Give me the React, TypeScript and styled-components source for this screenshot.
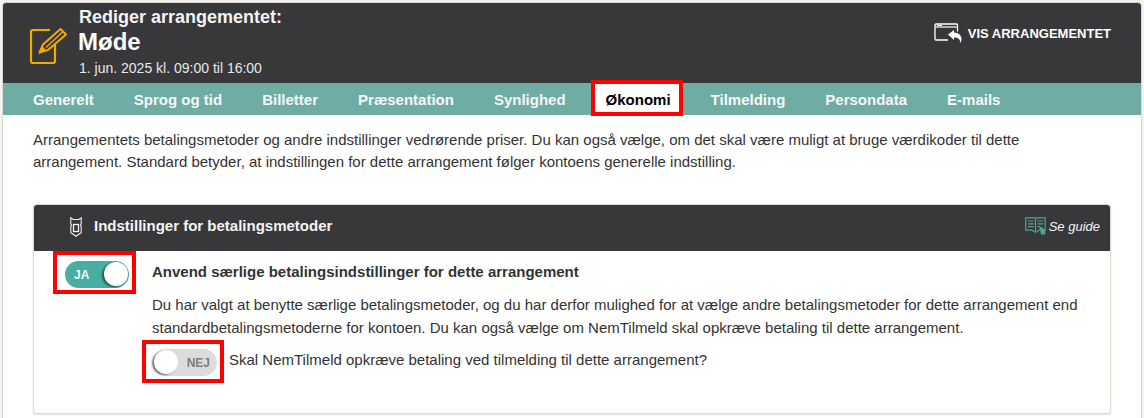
import React from "react";
import styled, { createGlobalStyle } from "styled-components";

const Global = createGlobalStyle`
  html, body { margin: 0; padding: 0; background: #fff; }
  body { font-family: "Liberation Sans", Arial, sans-serif; color: #333; overflow: hidden; }
`;
const Page = styled.div`
  width: 1144px; height: 418px; box-sizing: border-box; padding: 2px 2px 0 2px; overflow: hidden;
  background: #f4f3ef;
`;
const Card = styled.div`
  height: 416px; background: #fff; border: 1px solid #dcdad2; border-bottom: 0; border-radius: 4px 4px 0 0; box-sizing: border-box;
`;
const Header = styled.header`
  height: 80px; background: #38383a; border-radius: 3px 3px 0 0; display: flex; color: #fff;
  justify-content: space-between; box-sizing: border-box;
`;
const TitleGroup = styled.div`
  display: flex; align-items: flex-start; padding-left: 26px;
`;
const LogoSlot = styled.div`
  width: 50px; padding-top: 24px; flex: none;
`;
const Titles = styled.div`
  display: flex; flex-direction: column; padding-top: 4px;
`;
const Kicker = styled.div`
  font-size: 18px; font-weight: 700; line-height: 20px; color: #f4f4f4;
`;
const EventName = styled.h1`
  margin: 0 0 0 -1px; font-size: 24px; line-height: 30px; font-weight: 700;
`;
const EventDate = styled.div`
  font-size: 14px; line-height: 18px; margin-top: 2px; color: #e8e8e8;
`;
const ViewLink = styled.a`
  display: flex; align-items: center; gap: 6px; height: 24px; margin: 18px 30px 0 0;
  font-size: 13px; font-weight: 700; color: #fff;
`;
const Nav = styled.nav`
  height: 32px; background: #6fada4; display: flex; padding-left: 10px; align-items: stretch;
`;
const Tab = styled.a<{ $active?: boolean }>`
  position: relative; display: flex; align-items: center; padding: 0 20px;
  font-size: 15px; font-weight: 700; color: ${(p) => (p.$active ? "#000" : "#f4f8f7")};
  white-space: nowrap; z-index: 0;
  ${(p) =>
    p.$active &&
    `&::before { content: ""; position: absolute; z-index: -1; left: 5px; right: 8px; top: -3px; bottom: -1px;
      background: #fff; border: 4px solid #f00; box-sizing: border-box; }`}
`;
const Intro = styled.p`
  margin: 0; padding: 14px 30px 0; font-size: 15px; line-height: 22px; color: #333; height: 76px; box-sizing: border-box;
`;
const Panel = styled.section`
  margin: 13px 30px 0; height: 210px; box-sizing: border-box; border: 1px solid #dcdad2; border-radius: 4px;
  box-shadow: 0 1px 2px rgba(0,0,0,.12); background: #fff;
`;
const PanelHead = styled.div`
  height: 46px; background: #38383a; border-radius: 3px 3px 0 0; display: flex; box-sizing: border-box;
  align-items: center; justify-content: space-between; padding: 0 10px 4px 36px; color: #fff;
`;
const PanelTitle = styled.h2`
  margin: 0; font-size: 15px; font-weight: 700; display: flex; align-items: center; gap: 12px; color: #f4f4f4;
  line-height: 22px;
`;
const Guide = styled.a`
  display: flex; align-items: center; gap: 3px; font-size: 13px; font-style: italic; color: #f4f4f4;
`;
const PanelBody = styled.div`
  display: grid; grid-template-columns: 118px 1fr; padding-top: 10px;
`;
const ToggleCell = styled.div`
  padding-left: 31px;
`;
const Switch = styled.div<{ $on?: boolean }>`
  position: relative; width: 64px; height: 27px; border-radius: 14px; flex: none; box-sizing: border-box;
  background: ${(p) => (p.$on ? "#48aea4" : "#dcdcdc")};
  font-size: 12px; font-weight: 700; color: ${(p) => (p.$on ? "#f0f8f7" : "#7d7d7d")};
  display: flex; align-items: center; justify-content: ${(p) => (p.$on ? "flex-start" : "flex-end")};
  padding: 1px 7px 0 9px;
  &::before {
    content: ""; position: absolute; top: 1px; width: 24px; height: 24px; border-radius: 50%; background: #fff;
    ${(p) => (p.$on ? "right: 1px;" : "left: 1px;")}
    box-shadow: -2px 1px 2px rgba(0,0,0,.5);
  }
  &::after {
    content: ""; position: absolute; border: 4px solid #f00; box-sizing: border-box; pointer-events: none;
    ${(p) => (p.$on ? "left: -12px; right: -7px; top: -10px; bottom: -6px;" : "left: -11px; right: -7px; top: -9px; bottom: -7px;")}
  }
`;
const Content = styled.div`
  font-size: 15px; color: #333; padding-right: 20px;
`;
const Lead = styled.div`
  font-weight: 700; line-height: 22px;
`;
const Para = styled.p`
  margin: 10px 0 0; line-height: 23px;
`;
const QuestionRow = styled.div`
  display: flex; align-items: flex-start; gap: 12px; margin-top: 10px; line-height: 22px;
  margin-left: 1px;
`;

const NoteIcon = () => (
  <svg width="38" height="38" viewBox="0 0 38 38" fill="none" stroke="#f1aa00" strokeWidth="2.200" style={{ display: "block" }}>
    <path d="M21 3H4a2 2 0 0 0-2 2v29a2 2 0 0 0 2 2h20a2 2 0 0 0 2-2V17" />
    <path d="M10.500 25.500l3.500-8L31.500 2l5.500 5.500L19 23z" strokeLinejoin="round" strokeWidth="2" />
    <path d="M17 20.500L33.500 5" strokeWidth="1.400" />
    <path d="M9.500 27l8-3.500-4.500-4.500z" fill="#f1aa00" stroke="none" />
  </svg>
);

const ViewIcon = () => (
  <svg width="28" height="22" viewBox="0 0 28 22" fill="none" style={{ display: "block" }}>
    <path d="M23.500 9.500V3a1 1 0 0 0-1-1H2a1 1 0 0 0-1 1v14a1 1 0 0 0 1 1h12" stroke="#fff" strokeWidth="1.300" />
    <path d="M1 5h22" stroke="#fff" strokeWidth="1.200" />
    <path d="M3 3.500h5" stroke="#fff" strokeWidth="1" />
    <path d="M14 12.500l6-4.500v2.500c4 .2 7.500 2.500 7.500 6.500 0 1.600-.5 3-1.200 4 .1-3.500-2-5.500-6.300-5.500V18z" fill="#fff" />
  </svg>
);

const TicketIcon = () => (
  <svg width="12" height="22" viewBox="0 0 12 22" fill="none" stroke="#f0f0f0" strokeWidth="1.100" style={{ display: "block" }}>
    <path d="M.8 2.800L3 4.500h6l2.200-1.700v6L10.400 10l.8 1.200v6.600L8.500 19.500 6 21.300l-2.500-1.800-2.700-1.700v-6.600L1.600 10l-.8-1.200z" />
    <rect x="3.500" y="9.500" width="5" height="7" strokeWidth="1.300" />
  </svg>
);

const GuideIcon = () => (
  <svg width="21" height="18" viewBox="0 0 21 18" fill="none" stroke="#52a096" strokeWidth="1.200" style={{ display: "block" }}>
    <path d="M.8.800h9l.7 1 .7-1h9v12.400h-6l-3.700 2-3.700-2h-6z" />
    <path d="M10.500 2v12M3 4h5.500M3 6.800h5.500M3 9.600h5.500M12.500 4h6M12.500 6.800h6M12.500 9.600h2.500" />
    <path d="M14.500 10.500l1.500-1 4 3.500.5 4.500h-4.500z" fill="#52a096" stroke="none" />
  </svg>
);

const tabs = ["Generelt", "Sprog og tid", "Billetter", "Præsentation", "Synlighed", "Økonomi", "Tilmelding", "Persondata", "E-mails"];

export default function App() {
  return (
    <Page>
      <Global />
      <Card>
        <Header>
          <TitleGroup>
            <LogoSlot><NoteIcon /></LogoSlot>
            <Titles>
              <Kicker>Rediger arrangementet:</Kicker>
              <EventName>Møde</EventName>
              <EventDate>1. jun. 2025 kl. 09:00 til 16:00</EventDate>
            </Titles>
          </TitleGroup>
          <ViewLink><ViewIcon />VIS ARRANGEMENTET</ViewLink>
        </Header>
        <Nav>
          {tabs.map((t) => (
            <Tab key={t} $active={t === "Økonomi"}>{t}</Tab>
          ))}
        </Nav>
        <Intro>
          Arrangementets betalingsmetoder og andre indstillinger vedrørende priser. Du kan også vælge, om det skal være muligt at bruge værdikoder til dette arrangement. Standard betyder, at indstillingen for dette arrangement følger kontoens generelle indstilling.
        </Intro>
        <Panel>
          <PanelHead>
            <PanelTitle><TicketIcon /><span>Indstillinger for betalingsmetoder</span></PanelTitle>
            <Guide><GuideIcon />Se guide</Guide>
          </PanelHead>
          <PanelBody>
            <ToggleCell><Switch $on>JA</Switch></ToggleCell>
            <Content>
              <Lead>Anvend særlige betalingsindstillinger for dette arrangement</Lead>
              <Para>
                Du har valgt at benytte særlige betalingsmetoder, og du har derfor mulighed for at vælge andre betalingsmetoder for dette arrangement end standardbetalingsmetoderne for kontoen. Du kan også vælge om NemTilmeld skal opkræve betaling til dette arrangement.
              </Para>
              <QuestionRow>
                <Switch>NEJ</Switch>
                <span>Skal NemTilmeld opkræve betaling ved tilmelding til dette arrangement?</span>
              </QuestionRow>
            </Content>
          </PanelBody>
        </Panel>
      </Card>
    </Page>
  );
}
